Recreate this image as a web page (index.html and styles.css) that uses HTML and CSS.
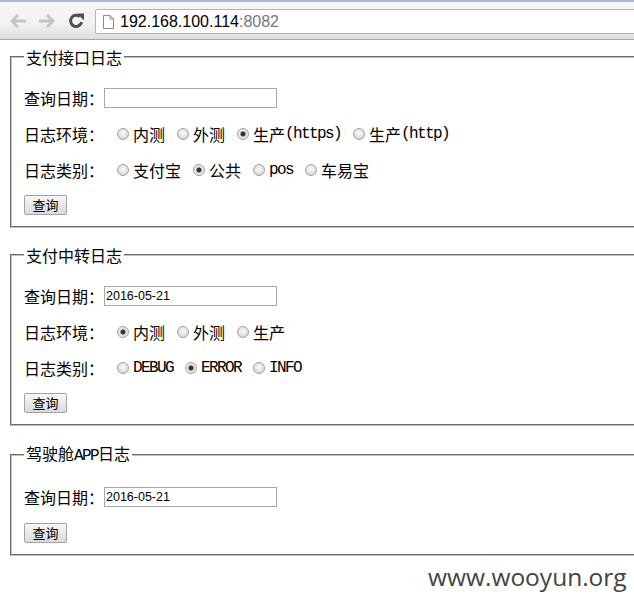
FILE: index.html
```html
<!DOCTYPE html>
<html>
<head>
<meta charset="utf-8">
<link rel="stylesheet" href="styles.css">
</head>
<body>
<div class="toolbar">
  <div class="tabstrip"></div>
  <div class="bar">
    <svg class="nav back" width="18" height="16" viewBox="0 0 18 16"><path d="M9 2 L3 8 L9 14 M3 8 H17" fill="none" stroke="#c4c4c4" stroke-width="3"/></svg>
    <svg class="nav fwd" width="18" height="16" viewBox="0 0 18 16"><path d="M9 2 L15 8 L9 14 M15 8 H1" fill="none" stroke="#c4c4c4" stroke-width="3"/></svg>
    <svg class="nav reload" width="17" height="17" viewBox="0 0 17 17"><path d="M13.6 10.2 A5.6 5.6 0 1 1 11.8 4.6" fill="none" stroke="#505050" stroke-width="3"/><path d="M9 1.5 L16 1.5 L16 8.5 Z" fill="#505050"/></svg>
    <div class="omnibox">
      <svg class="pageicon" width="11" height="14" viewBox="0 0 11 14"><path d="M0.5 0.5 H7 L10.5 4 V13.5 H0.5 Z" fill="#fff" stroke="#8a8a8a"/><path d="M7 0.5 V4 H10.5" fill="none" stroke="#8a8a8a"/></svg>
      <span class="host">192.168.100.114</span><span class="port">:8082</span>
    </div>
  </div>
</div>

<div class="page">
  <fieldset class="group">
    <legend>支付接口日志</legend>
    <div class="row first"><span class="label">查询日期：</span><input class="date" type="text" value=""></div>
    <div class="row">
      <span class="label">日志环境：</span>
      <label class="opt"><input type="radio" name="e1">内测</label>
      <label class="opt"><input type="radio" name="e1">外测</label>
      <label class="opt"><input type="radio" name="e1" checked>生产<span class="en">(https)</span></label>
      <label class="opt"><input type="radio" name="e1">生产<span class="en">(http)</span></label>
    </div>
    <div class="row">
      <span class="label">日志类别：</span>
      <label class="opt"><input type="radio" name="t1">支付宝</label>
      <label class="opt"><input type="radio" name="t1" checked>公共</label>
      <label class="opt"><input type="radio" name="t1"><span class="en">pos</span></label>
      <label class="opt"><input type="radio" name="t1">车易宝</label>
    </div>
    <div class="row btnrow"><button class="btn" type="button">查询</button></div>
  </fieldset>

  <fieldset class="group">
    <legend>支付中转日志</legend>
    <div class="row first"><span class="label">查询日期：</span><input class="date" type="text" value="2016-05-21"></div>
    <div class="row">
      <span class="label">日志环境：</span>
      <label class="opt"><input type="radio" name="e2" checked>内测</label>
      <label class="opt"><input type="radio" name="e2">外测</label>
      <label class="opt"><input type="radio" name="e2">生产</label>
    </div>
    <div class="row">
      <span class="label">日志类别：</span>
      <label class="opt"><input type="radio" name="t2"><span class="en">DEBUG</span></label>
      <label class="opt"><input type="radio" name="t2" checked><span class="en">ERROR</span></label>
      <label class="opt"><input type="radio" name="t2"><span class="en">INFO</span></label>
    </div>
    <div class="row btnrow"><button class="btn" type="button">查询</button></div>
  </fieldset>

  <fieldset class="group">
    <legend>驾驶舱<span class="en">APP</span>日志</legend>
    <div class="row first"><span class="label">查询日期：</span><input class="date" type="text" value="2016-05-21"></div>
    <div class="row btnrow last"><button class="btn" type="button">查询</button></div>
  </fieldset>
</div>

<div class="watermark">www.wooyun.org</div>
</body>
</html>
```

FILE: styles.css
```css
html, body {
  margin: 0;
  padding: 0;
  background: #fff;
  width: 634px;
  height: 607px;
  overflow: hidden;
  position: relative;
}

body {
  font-family: "Noto Sans CJK SC", "Liberation Sans", sans-serif;
  color: #000;
}

.toolbar {
  height: 40px;
  box-sizing: border-box;
  border-bottom: 1px solid #a9a9a9;
  background: linear-gradient(#f7f7f7, #f2f2f2 60%, #dedede);
}

.tabstrip {
  height: 2px;
  background: #a9bcd3;
}

.bar {
  display: flex;
  align-items: center;
  height: 37px;
}

.nav {
  flex: none;
}

.back { margin-left: 9px; }
.fwd { margin-left: 11px; }
.reload { margin-left: 12px; }

.omnibox {
  margin-left: 10px;
  height: 25px;
  flex: 1;
  margin-right: -10px;
  box-sizing: border-box;
  background: #fff;
  border: 1px solid #b5b5b5;
  border-radius: 2px;
  display: flex;
  align-items: center;
  font-family: "Liberation Sans", Arial, sans-serif;
  font-size: 16px;
  margin-top: 2px;
}

.pageicon {
  margin-left: 7px;
  margin-right: 6px;
}

.host { color: #000; }
.port { color: #777; }

.page {
  padding: 7px 0 0 10px;
  overflow: hidden;
}

.group {
  margin: 0 -60px 17px 0;
  border: 2px groove #c0c0c0;
  padding: 0 12px 11px 12px;
  font-size: 16px;
}

.group legend {
  padding: 0 2px;
  line-height: 20px;
  font-size: 16px;
}

.row {
  display: flex;
  align-items: center;
  height: 20px;
  margin-top: 16px;
  line-height: 20px;
  white-space: nowrap;
}

.row.first { margin-top: 21px; }
.row.btnrow { margin-top: 15px; }
.row.btnrow.last { margin-top: 16px; }

.label {
  width: 80px;
  flex: none;
}

.date {
  width: 173px;
  height: 20px;
  box-sizing: border-box;
  border: 1px solid #a9a9a9;
  padding: 0 1px;
  margin: 0;
  font-family: "Liberation Sans", Arial, sans-serif;
  font-size: 12.5px;
  color: #000;
  outline: none;
}

.opt {
  display: flex;
  align-items: center;
  margin-left: 12px;
}

.label + .opt { margin-left: 13px; }

.opt input {
  appearance: none;
  -webkit-appearance: none;
  width: 12px;
  height: 12px;
  margin: 0 4px 0 0;
  border: 1px solid #a2a2a2;
  border-radius: 50%;
  box-sizing: border-box;
  background: radial-gradient(circle at 50% 40%, #fbfbfb 0, #e6e6e6 45%, #cdcdcd 100%);
}

.opt input:checked {
  background: radial-gradient(circle at 50% 50%, #2c2c2c 0, #3a3a3a 2px, #d8d8d8 3px, #ececec 4px, #cfcfcf 100%);
}

.en {
  font-family: "Liberation Mono", "DejaVu Sans Mono", monospace;
  font-size: 16px;
  letter-spacing: -1.6px;
}

.btn {
  width: 43px;
  height: 20px;
  padding: 0;
  margin: 0;
  border: 1px solid #a3a3a3;
  border-radius: 2px;
  background: linear-gradient(#f8f8f8, #e9e9e9 50%, #dadada);
  font-family: "Noto Sans CJK SC", sans-serif;
  font-size: 13px;
  color: #000;
  line-height: 18px;
}

.watermark {
  position: absolute;
  left: 428px;
  top: 562px;
  font-family: "Open Sans", "Liberation Sans", sans-serif;
  font-size: 24.5px;
  color: #444;
  line-height: 30px;
  white-space: nowrap;
}
```
